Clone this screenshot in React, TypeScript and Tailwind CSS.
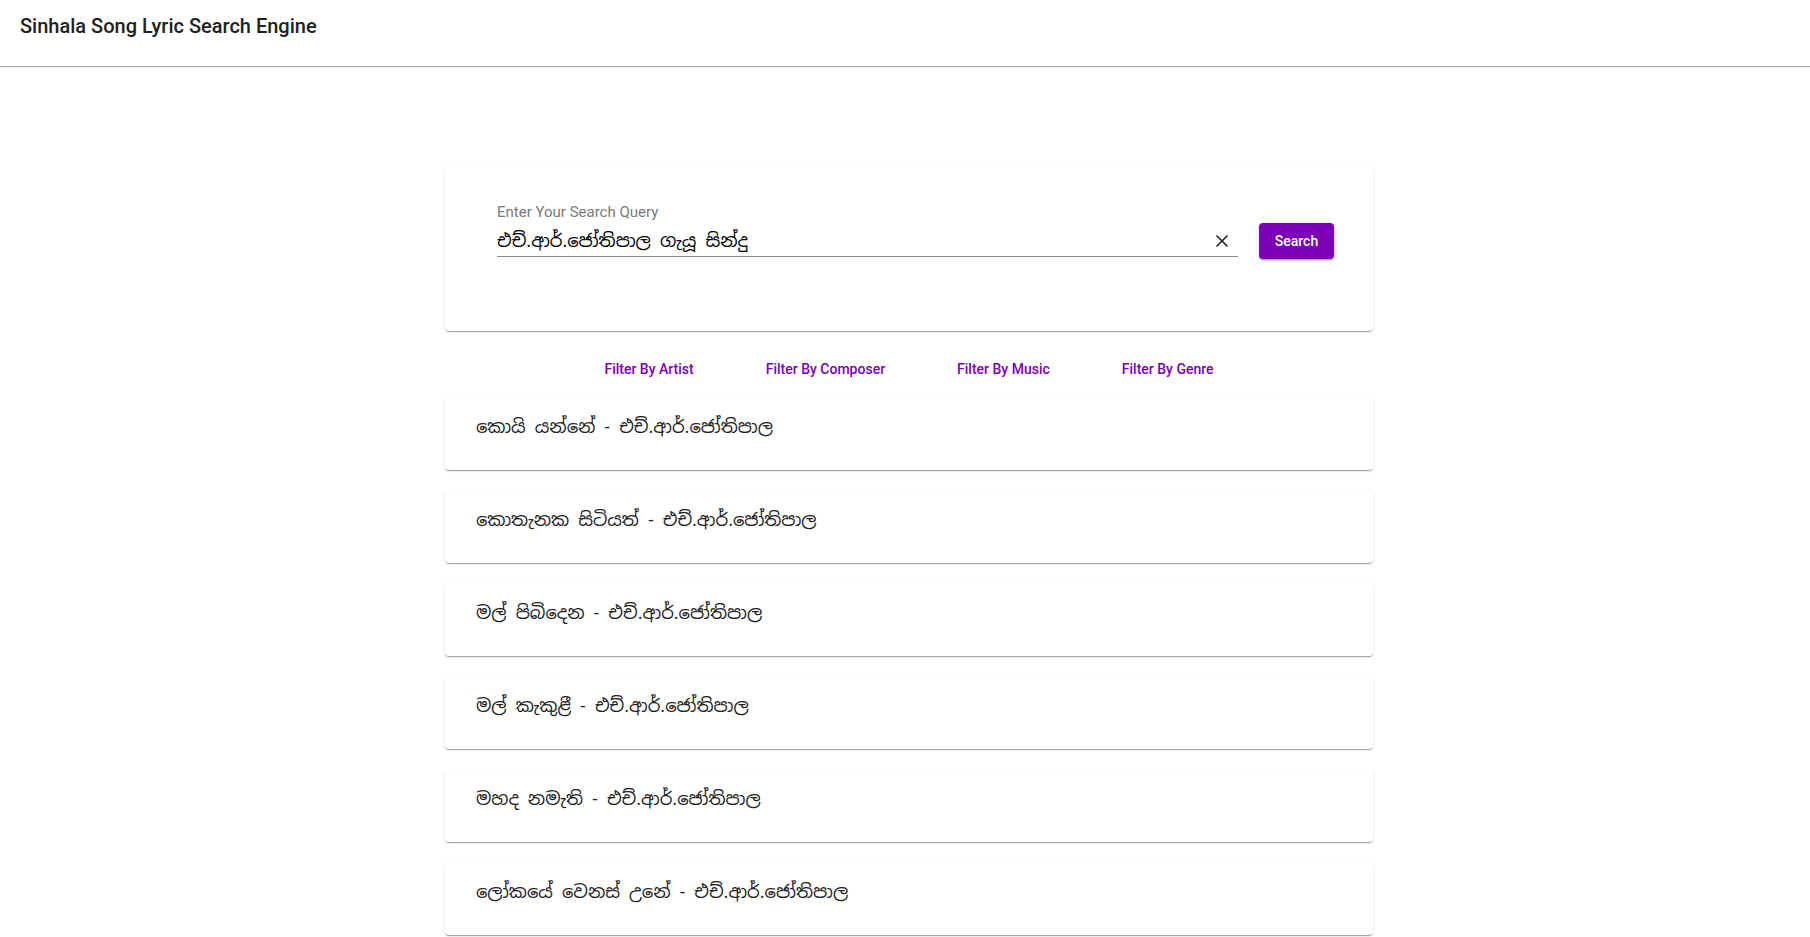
import { X } from "lucide-react";

const songs = [
  "කොයි යන්නේ - එච්.ආර්.ජෝතිපාල",
  "කොතැනක සිටියත් - එච්.ආර්.ජෝතිපාල",
  "මල් පිබිදෙන - එච්.ආර්.ජෝතිපාල",
  "මල් කැකුළී - එච්.ආර්.ජෝතිපාල",
  "මහද නමැති - එච්.ආර්.ජෝතිපාල",
  "ලෝකයේ වෙනස් උනේ - එච්.ආර්.ජෝතිපාල",
];

const filters = ["Filter By Artist", "Filter By Composer", "Filter By Music", "Filter By Genre"];

const sinhala = "font-['Noto_Sans_Sinhala','Iskoola_Pota','Noto_Sans',sans-serif]";

export default function App() {
  return (
    <div className="min-h-screen bg-white font-['Roboto',sans-serif] text-[#212121]">
      <header className="h-[67px] border-b border-[#a3a3a3] px-5 pt-3 shadow-[0_1px_3px_rgba(0,0,0,0.08)]">
        <h1 className="text-[20px] leading-[28px] font-medium">Sinhala Song Lyric Search Engine</h1>
      </header>

      <main className="pl-2 pt-[99px]">
        <div className="mx-auto w-[928px]">
          <div className="h-[165px] rounded bg-white pl-[52px] pr-[39px] pt-[37px] shadow-[0_2px_1px_-1px_rgba(0,0,0,0.2),0_1px_1px_0_rgba(0,0,0,0.14),0_1px_3px_0_rgba(0,0,0,0.12)]">
            <div className="flex items-end gap-[21px]">
              <div className="flex-1">
                <label className="block text-[15px] leading-[18px] text-[#7a7a7a]">Enter Your Search Query</label>
                <div className="mt-[5px] flex h-[31px] items-center border-b border-[#8a8a8a]">
                  <span className={`flex-1 text-[18px] leading-[28px] text-black ${sinhala}`}>
                    එච්.ආර්.ජෝතිපාල ගැයූ සින්දු
                  </span>
                  <X className="mr-[6px] h-5 w-5 text-[#222]" strokeWidth={2} />
                </div>
              </div>
              <button className="mb-[-2px] h-[36px] w-[75px] rounded bg-[#7a00b9] text-[14px] font-medium text-white shadow-[0_3px_1px_-2px_rgba(0,0,0,0.2),0_2px_2px_0_rgba(0,0,0,0.14),0_1px_5px_0_rgba(0,0,0,0.12)]">
                Search
              </button>
            </div>
          </div>

          <div className="flex h-[66px] items-center justify-center gap-[72px] pt-[10px]">
            {filters.map((f) => (
              <span key={f} className="text-[14px] font-medium text-[#7a00b9]">
                {f}
              </span>
            ))}
          </div>

          <div className="flex flex-col gap-[20px]">
            {songs.map((s) => (
              <div
                key={s}
                className="h-[73px] rounded bg-white pl-[31px] pt-[15px] shadow-[0_2px_1px_-1px_rgba(0,0,0,0.2),0_1px_1px_0_rgba(0,0,0,0.14),0_1px_3px_0_rgba(0,0,0,0.12)]"
              >
                <p className={`text-[18px] leading-[30px] text-[#222] ${sinhala}`}>{s}</p>
              </div>
            ))}
          </div>
        </div>
      </main>
    </div>
  );
}
